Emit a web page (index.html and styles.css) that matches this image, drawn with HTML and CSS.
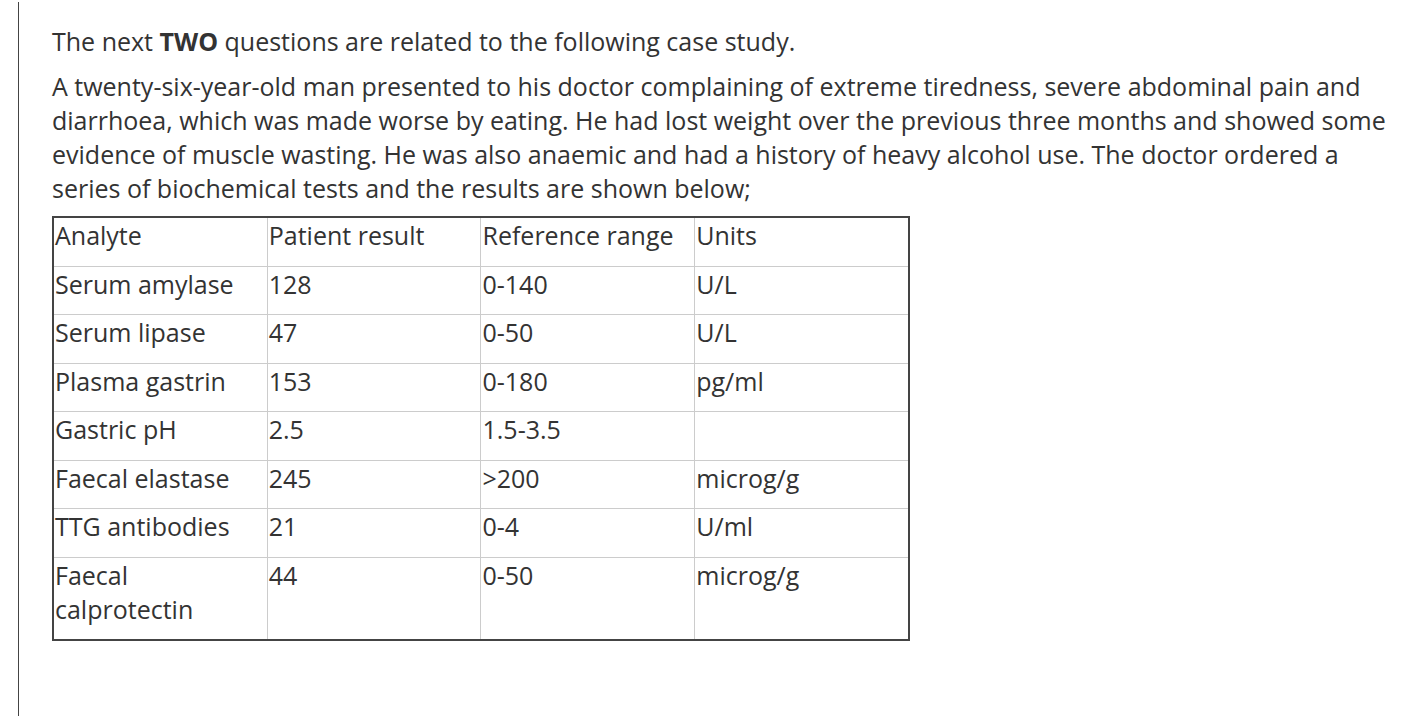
FILE: index.html
```html
<!DOCTYPE html>
<html lang="en">
<head>
<meta charset="utf-8">
<title>Case study</title>
<link rel="stylesheet" href="styles.css">
</head>
<body>
<div class="page">
  <div class="content">
    <p class="intro">The next <strong>TWO</strong> questions are related to the following case study.</p>
    <p class="case">A twenty-six-year-old man presented to his doctor complaining of extreme tiredness, severe abdominal pain and diarrhoea, which was made worse by eating. He had lost weight over the previous three months and showed some evidence of muscle wasting. He was also anaemic and had a history of heavy alcohol use. The doctor ordered a series of biochemical tests and the results are shown below;</p>
    <table class="results">
      <tr><td>Analyte</td><td>Patient result</td><td>Reference range</td><td>Units</td></tr>
      <tr><td>Serum amylase</td><td>128</td><td>0-140</td><td>U/L</td></tr>
      <tr><td>Serum lipase</td><td>47</td><td>0-50</td><td>U/L</td></tr>
      <tr><td>Plasma gastrin</td><td>153</td><td>0-180</td><td>pg/ml</td></tr>
      <tr><td>Gastric pH</td><td>2.5</td><td>1.5-3.5</td><td></td></tr>
      <tr><td>Faecal elastase</td><td>245</td><td>&gt;200</td><td>microg/g</td></tr>
      <tr><td>TTG antibodies</td><td>21</td><td>0-4</td><td>U/ml</td></tr>
      <tr><td>Faecal calprotectin</td><td>44</td><td>0-50</td><td>microg/g</td></tr>
    </table>
  </div>
</div>
</body>
</html>
```
FILE: styles.css
```css
html, body {
  margin: 0;
  padding: 0;
  background: #fff;
}
.page {
  margin-left: 18px;
  margin-top: 2px;
  height: 714px;
  border-left: 1px solid #444;
  font-family: "Open Sans", sans-serif;
  font-size: 25px;
  line-height: 34px;
  color: #333;
}
.content {
  padding: 22px 0 0 33px;
  width: 1345px;
}
p {
  margin: 0 0 11px 0;
}
strong {
  font-weight: 700;
}
.results {
  border-collapse: collapse;
  border: 2px solid #444;
  width: 858px;
  table-layout: fixed;
  margin-top: 9px;
}
.results td {
  border: 1px solid #ccc;
  width: 25%;
  vertical-align: top;
  padding: 0 0 13.5px 1px;
}
```
